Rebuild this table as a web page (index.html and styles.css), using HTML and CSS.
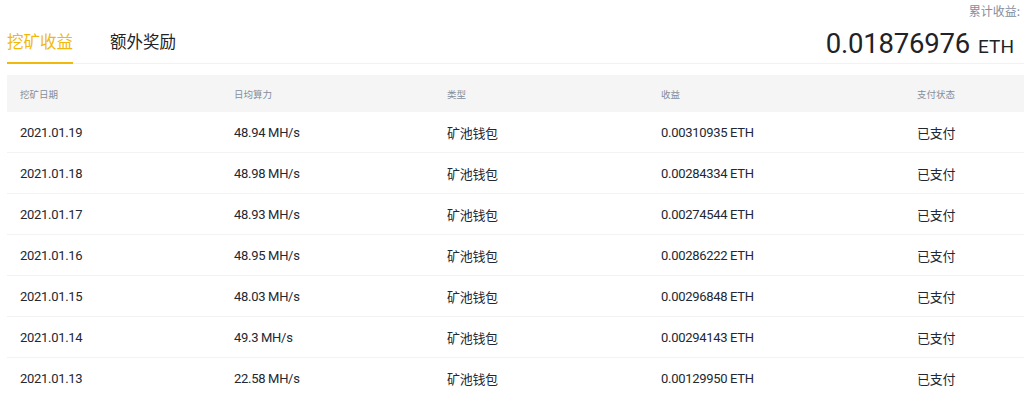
FILE: index.html
```html
<!DOCTYPE html>
<html lang="zh-CN">
<head>
<meta charset="utf-8">
<title>挖矿收益</title>
<link rel="stylesheet" href="styles.css">
</head>
<body>
<div class="page">
  <div class="top">
    <div class="tabs">
      <div class="tab active">挖矿收益</div>
      <div class="tab">额外奖励</div>
    </div>
    <div class="summary">
      <div class="label">累计收益:</div>
      <div class="total"><span class="amount">0.01876976</span><span class="unit">ETH</span></div>
    </div>
  </div>
  <div class="table">
    <div class="row head">
      <div>挖矿日期</div><div>日均算力</div><div>类型</div><div>收益</div><div>支付状态</div>
    </div>
    <div class="row"><div>2021.01.19</div><div>48.94 MH/s</div><div>矿池钱包</div><div>0.00310935 ETH</div><div>已支付</div></div>
    <div class="row"><div>2021.01.18</div><div>48.98 MH/s</div><div>矿池钱包</div><div>0.00284334 ETH</div><div>已支付</div></div>
    <div class="row"><div>2021.01.17</div><div>48.93 MH/s</div><div>矿池钱包</div><div>0.00274544 ETH</div><div>已支付</div></div>
    <div class="row"><div>2021.01.16</div><div>48.95 MH/s</div><div>矿池钱包</div><div>0.00286222 ETH</div><div>已支付</div></div>
    <div class="row"><div>2021.01.15</div><div>48.03 MH/s</div><div>矿池钱包</div><div>0.00296848 ETH</div><div>已支付</div></div>
    <div class="row"><div>2021.01.14</div><div>49.3 MH/s</div><div>矿池钱包</div><div>0.00294143 ETH</div><div>已支付</div></div>
    <div class="row"><div>2021.01.13</div><div>22.58 MH/s</div><div>矿池钱包</div><div>0.00129950 ETH</div><div>已支付</div></div>
  </div>
</div>
</body>
</html>
```
FILE: styles.css
```css
* { box-sizing: border-box; }
html, body { margin: 0; padding: 0; background: #fff; }
body {
  font-family: Roboto, "Noto Sans CJK SC", sans-serif;
  color: #212833;
}
.page { padding-left: 7px; }
.top {
  display: flex;
  justify-content: space-between;
  height: 64px;
  border-bottom: 1px solid #f2f2f2;
  padding-right: 10px;
}
.tabs {
  display: flex;
  align-self: flex-end;
  gap: 37px;
  margin-bottom: -1px;
}
.tab {
  font-family: "Noto Sans CJK SC", sans-serif;
  font-size: 16.5px;
  line-height: 24px;
  padding-bottom: 9px;
  border-bottom: 2px solid transparent;
  color: #1e2329;
}
.tab.active {
  color: #f0b90b;
  border-bottom-color: #f0b90b;
}
.summary {
  padding-top: 3px;
  text-align: right;
}
.label {
  font-family: "Noto Sans CJK SC", sans-serif;
  font-size: 12px;
  line-height: 16px;
  color: #848e9c;
  margin-right: -6px;
}
.total {
  margin-top: 9px;
  line-height: 32px;
  display: flex;
  align-items: baseline;
  justify-content: flex-end;
  gap: 8px;
}
.amount {
  font-size: 27.5px;
  color: #1e2329;
  letter-spacing: -0.2px;
}
.unit {
  font-size: 19px;
  color: #1e2329;
}
.table { margin-top: 11px; }
.row {
  display: grid;
  grid-template-columns: 214px 213px 214px 256px 1fr;
  padding-left: 13px;
  height: 41px;
  align-items: center;
  font-size: 13px;
  letter-spacing: -0.3px;
  color: #212833;
  border-bottom: 1px solid #f3f3f3;
}
.row.head {
  height: 37px;
  background: #f5f5f5;
  border-bottom: none;
  font-size: 9.5px;
  letter-spacing: 0;
  color: #848e9c;
}
```
